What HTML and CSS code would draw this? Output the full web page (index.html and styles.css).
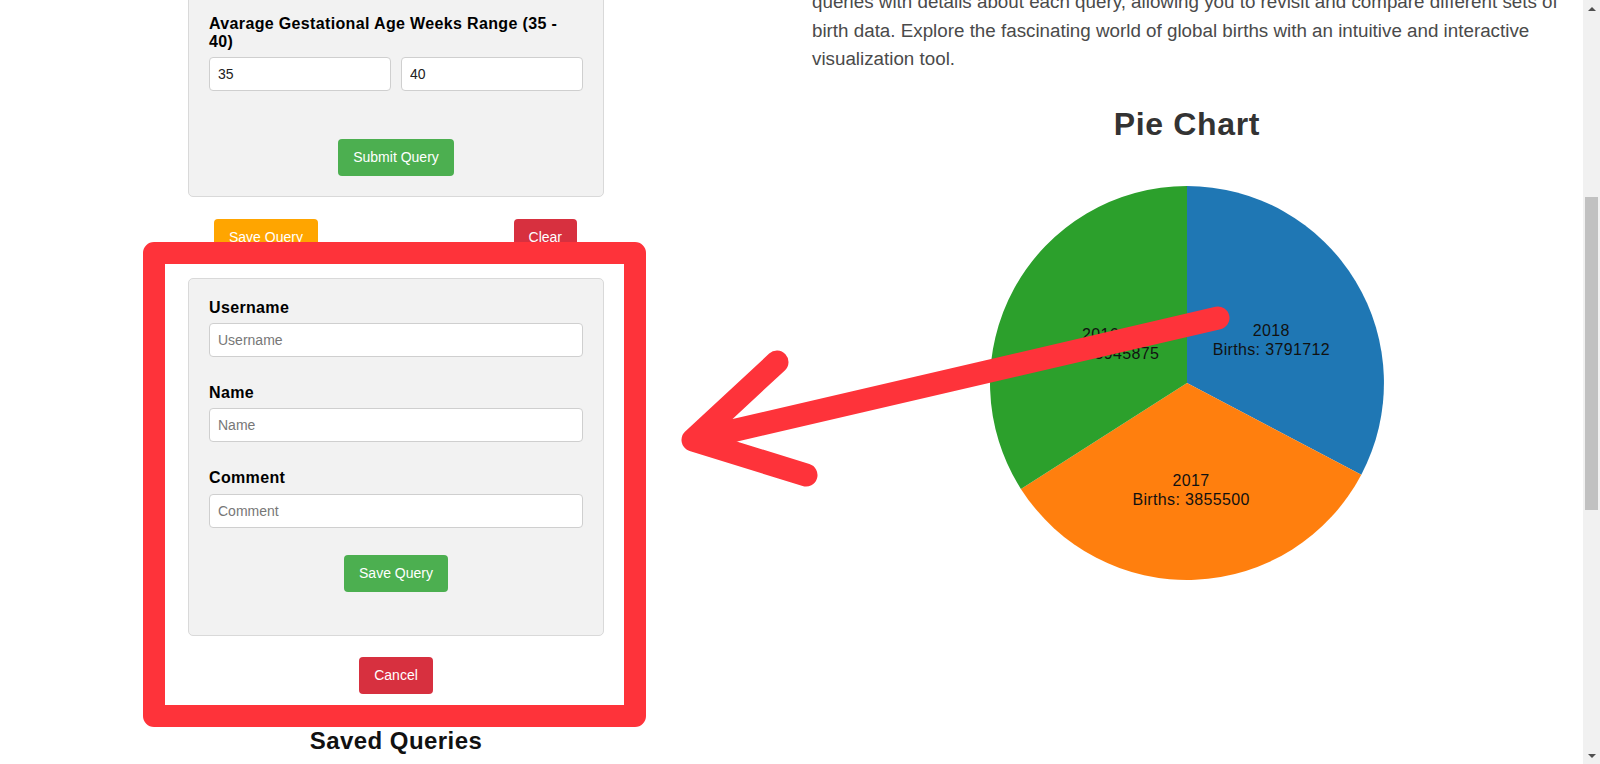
FILE: index.html
```html
<!DOCTYPE html>
<html lang="en">
<head>
<meta charset="utf-8">
<title>Births Query</title>
<link rel="stylesheet" href="styles.css">
</head>
<body>
<div class="viewport">
  <div class="page">
    <div class="page-inner">
      <div class="left-col">
        <div class="panel panel-query">
          <label class="field-label label-range">Avarage Gestational Age Weeks Range (35 - 40)</label>
          <div class="range-row">
            <input class="text-input" type="text" value="35">
            <input class="text-input" type="text" value="40">
          </div>
          <div class="btn-center submit-wrap">
            <button class="btn btn-green">Submit Query</button>
          </div>
        </div>
        <div class="action-row">
          <button class="btn btn-orange">Save Query</button>
          <button class="btn btn-red">Clear</button>
        </div>
        <div class="panel panel-save">
          <div class="form-group">
            <label class="field-label">Username</label>
            <input class="text-input" type="text" placeholder="Username">
          </div>
          <div class="form-group">
            <label class="field-label">Name</label>
            <input class="text-input" type="text" placeholder="Name">
          </div>
          <div class="form-group">
            <label class="field-label">Comment</label>
            <input class="text-input" type="text" placeholder="Comment">
          </div>
          <div class="btn-center save-wrap">
            <button class="btn btn-green">Save Query</button>
          </div>
        </div>
        <div class="btn-center cancel-wrap">
          <button class="btn btn-red">Cancel</button>
        </div>
        <h2 class="saved-title">Saved Queries</h2>
      </div>
      <div class="right-col">
        <p class="intro">queries with details about each query, allowing you to revisit and compare different sets of birth data. Explore the fascinating world of global births with an intuitive and interactive visualization tool.</p>
        <h1 class="chart-title">Pie Chart</h1>
        <svg class="pie" width="400" height="400" viewBox="0 0 400 400">
          <path d="M200,200 L200,3 A197,197 0 0 1 374.3,291.7 Z" fill="#1f77b4"/>
          <path d="M200,200 L374.3,291.7 A197,197 0 0 1 33.9,305.9 Z" fill="#ff7f0e"/>
          <path d="M200,200 L33.9,305.9 A197,197 0 0 1 200,3 Z" fill="#2ca02c"/>
          <text class="pie-label" x="284.3" y="153"><tspan x="284.3">2018</tspan><tspan x="284.3" dy="19">Births: 3791712</tspan></text>
          <text class="pie-label" x="204.1" y="302.5"><tspan x="204.1">2017</tspan><tspan x="204.1" dy="19">Births: 3855500</tspan></text>
          <text class="pie-label" x="113.6" y="156.5"><tspan x="113.6">2016</tspan><tspan x="113.6" dy="19">Births: 3945875</tspan></text>
        </svg>
      </div>
    </div>
  </div>
  <div class="scrollbar">
    <div class="sb-btn"><span class="tri-up"></span></div>
    <div class="sb-track"><div class="sb-thumb"></div></div>
    <div class="sb-btn"><span class="tri-down"></span></div>
  </div>
</div>
<svg class="annotation" width="1600" height="764" viewBox="0 0 1600 764">
  <rect x="154" y="253" width="481" height="463" fill="none" stroke="#fe333a" stroke-width="22" stroke-linejoin="round"/>
  <path d="M1218,318 L693,440 M777,362 L693,440 L806,475" fill="none" stroke="#fe333a" stroke-width="23" stroke-linecap="round" stroke-linejoin="round"/>
</svg>
</body>
</html>
```

FILE: styles.css
```css
* {
  box-sizing: border-box;
}

html, body {
  margin: 0;
  padding: 0;
  height: 100%;
  overflow: hidden;
  background: #ffffff;
}

body {
  font-family: "Liberation Sans", Arial, sans-serif;
  color: #000;
  position: relative;
}

.viewport {
  display: flex;
  height: 764px;
  overflow: hidden;
}

.page {
  flex: 1;
  overflow: hidden;
}

.page-inner {
  display: grid;
  grid-template-columns: 416px 750px;
  column-gap: 208px;
  padding-left: 188px;
  margin-top: -12px;
}

/* left column */
.panel {
  background: #f2f2f2;
  border: 1px solid #d9d9d9;
  border-radius: 5px;
  padding: 20px;
}

.panel-query {
  padding-top: 26px;
}

.field-label {
  display: block;
  font-weight: bold;
  font-size: 16px;
  line-height: normal;
  letter-spacing: 0.35px;
  margin-bottom: 6px;
  color: #000;
}

.label-range {
  max-width: 360px;
}

.range-row {
  display: flex;
  gap: 10px;
}

.text-input {
  display: block;
  width: 100%;
  height: 34px;
  padding: 8px;
  font-family: "Liberation Sans", Arial, sans-serif;
  font-size: 14px;
  color: #222;
  background: #fff;
  border: 1px solid #cfcfcf;
  border-radius: 4px;
  outline: none;
}

.text-input::placeholder {
  color: #777;
}

.btn-center {
  display: flex;
  justify-content: center;
}

.submit-wrap {
  margin-top: 48px;
}

.btn {
  font-family: "Liberation Sans", Arial, sans-serif;
  font-size: 14px;
  line-height: 17px;
  padding: 10px 15px;
  border: none;
  border-radius: 4px;
  color: #fff;
  cursor: pointer;
}

.btn-green {
  background: #4caf50;
}

.btn-orange {
  background: #ffa500;
}

.btn-red {
  background: #d7303f;
}

.action-row {
  display: flex;
  justify-content: space-between;
  padding: 0 27px 0 26px;
  margin-top: 22px;
}

.panel-save {
  margin-top: 22px;
}

.form-group {
  margin-bottom: 27px;
}

.form-group:nth-child(3) .field-label {
  margin-bottom: 7px;
}

.save-wrap {
  margin-bottom: 23px;
}

.cancel-wrap {
  margin-top: 21px;
}

.saved-title {
  margin: 33px 0 0;
  text-align: center;
  font-size: 24px;
  line-height: normal;
  letter-spacing: 0.45px;
  font-weight: bold;
  color: #111;
}

/* right column */
.intro {
  margin: 0;
  font-size: 18.8px;
  line-height: 28.5px;
  color: #4a4a4a;
}

.chart-title {
  margin: 32px 0 40px;
  text-align: center;
  font-size: 32px;
  line-height: normal;
  letter-spacing: 0.65px;
  font-weight: bold;
  color: #333;
}

.pie {
  display: block;
  margin: 0 auto;
}

.pie-label {
  font-family: "Liberation Sans", Arial, sans-serif;
  font-size: 16px;
  letter-spacing: 0.35px;
  fill: #111;
  text-anchor: middle;
}

/* fake scrollbar */
.scrollbar {
  width: 17px;
  background: #f1f1f1;
  display: flex;
  flex-direction: column;
}

.sb-btn {
  height: 17px;
  display: flex;
  align-items: center;
  justify-content: center;
}

.tri-up {
  width: 0;
  height: 0;
  border-left: 4px solid transparent;
  border-right: 4px solid transparent;
  border-bottom: 4px solid #505050;
}

.tri-down {
  width: 0;
  height: 0;
  border-left: 4px solid transparent;
  border-right: 4px solid transparent;
  border-top: 4px solid #505050;
}

.sb-track {
  flex: 1;
  padding-top: 180px;
}

.sb-thumb {
  height: 313px;
  margin: 0 2px;
  background: #c1c1c1;
}

/* annotation overlay */
.annotation {
  position: absolute;
  top: 0;
  left: 0;
  pointer-events: none;
}
```
